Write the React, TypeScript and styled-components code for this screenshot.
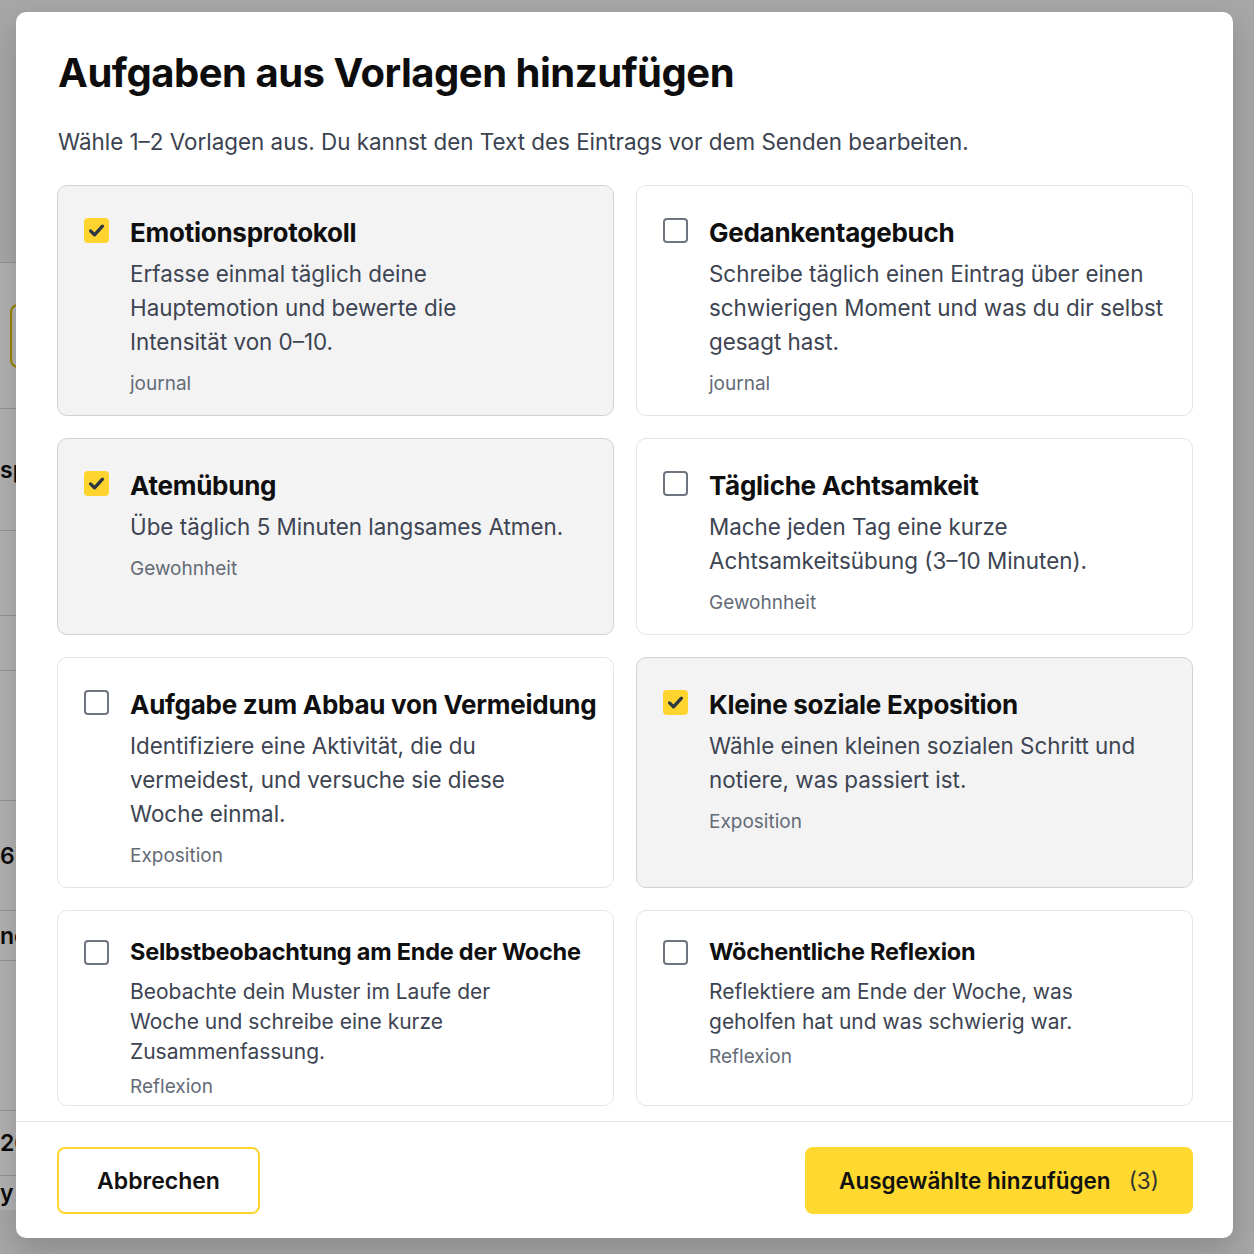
import React, { Fragment } from "react";
import styled, { createGlobalStyle, css } from "styled-components";

const GlobalStyle = createGlobalStyle`
  html, body { margin: 0; padding: 0; }
  body { font-family: Inter, "Noto Sans", "Liberation Sans", sans-serif; -webkit-font-smoothing: antialiased; }
  * { box-sizing: border-box; }
`;

type Template = {
  title: string;
  lines: string[];
  tag: string;
  checked: boolean;
};

const templates: Template[] = [
  {
    title: "Emotionsprotokoll",
    lines: ["Erfasse einmal täglich deine", "Hauptemotion und bewerte die", "Intensität von 0–10."],
    tag: "journal",
    checked: true,
  },
  {
    title: "Gedankentagebuch",
    lines: ["Schreibe täglich einen Eintrag über einen", "schwierigen Moment und was du dir selbst", "gesagt hast."],
    tag: "journal",
    checked: false,
  },
  {
    title: "Atemübung",
    lines: ["Übe täglich 5 Minuten langsames Atmen."],
    tag: "Gewohnheit",
    checked: true,
  },
  {
    title: "Tägliche Achtsamkeit",
    lines: ["Mache jeden Tag eine kurze", "Achtsamkeitsübung (3–10 Minuten)."],
    tag: "Gewohnheit",
    checked: false,
  },
  {
    title: "Aufgabe zum Abbau von Vermeidung",
    lines: ["Identifiziere eine Aktivität, die du", "vermeidest, und versuche sie diese", "Woche einmal."],
    tag: "Exposition",
    checked: false,
  },
  {
    title: "Kleine soziale Exposition",
    lines: ["Wähle einen kleinen sozialen Schritt und", "notiere, was passiert ist."],
    tag: "Exposition",
    checked: true,
  },
  {
    title: "Selbstbeobachtung am Ende der Woche",
    lines: ["Beobachte dein Muster im Laufe der", "Woche und schreibe eine kurze", "Zusammenfassung."],
    tag: "Reflexion",
    checked: false,
  },
  {
    title: "Wöchentliche Reflexion",
    lines: ["Reflektiere am Ende der Woche, was", "geholfen hat und was schwierig war."],
    tag: "Reflexion",
    checked: false,
  },
];

/* ---------- underlying page (dimmed) ---------- */

const Stage = styled.div`
  position: relative;
  width: 1254px;
  height: 1254px;
  overflow: hidden;
  background: #f0f0f0;
`;

const UnderPage = styled.div`
  display: flex;
  flex-direction: column;
  padding-top: 262px;
  width: 600px;
`;

const UnderRow = styled.div<{ $h: number }>`
  height: ${(p) => p.$h}px;
  border-top: 1px solid #d6d6d6;
  background: #ffffff;
  display: flex;
  align-items: center;
  font-size: 23px;
  font-weight: 600;
  color: #111;
`;

const UnderTag = styled.div`
  margin-left: 10px;
  width: 200px;
  height: 64px;
  border: 2px solid #e0b800;
  border-radius: 8px;
`;

const Overlay = styled.div`
  position: absolute;
  inset: 0;
  background: rgba(0, 0, 0, 0.3);
  display: flex;
  align-items: flex-start;
  padding: 12px 21px 16px 16px;
`;

/* ---------- modal ---------- */

const Modal = styled.div`
  width: 1217px;
  height: 1226px;
  background: #ffffff;
  border-radius: 10px;
  box-shadow: 0 12px 32px rgba(0, 0, 0, 0.18);
  display: flex;
  flex-direction: column;
  overflow: hidden;
`;

const Header = styled.header`
  padding: 37px 41px 0 42px;
`;

const Title = styled.h1`
  margin: 0;
  font-size: 40px;
  line-height: 48px;
  font-weight: 700;
  letter-spacing: -0.012em;
  color: #0d0d0d;
`;

const Subtitle = styled.p`
  margin: 30px 0 0;
  font-size: 22.4px;
  line-height: 30px;
  color: #3b4250;
`;

const Body = styled.div`
  flex: 1;
  overflow: hidden;
  padding: 28px 40px 18px 41px;
`;

const Grid = styled.div`
  display: grid;
  grid-template-columns: minmax(0, 1fr) minmax(0, 1fr);
  column-gap: 22px;
  row-gap: 22px;
`;

const Card = styled.label<{ $selected: boolean; $compact: boolean }>`
  display: flex;
  align-items: flex-start;
  gap: 21px;
  min-width: 0;
  border-radius: 10px;
  border: 1px solid ${(p) => (p.$selected ? "#d2d2d4" : "#e4e5e7")};
  background: ${(p) => (p.$selected ? "#f3f3f4" : "#ffffff")};
  padding: ${(p) => (p.$compact ? "26px 26px 5px" : "31px 26px 18px")};
  cursor: pointer;
`;

const Box = styled.span<{ $checked: boolean; $compact: boolean }>`
  flex: none;
  width: 25px;
  height: 25px;
  margin-top: ${(p) => (p.$compact ? "3px" : "1px")};
  border-radius: 4px;
  display: flex;
  align-items: center;
  justify-content: center;
  ${(p) =>
    p.$checked
      ? css`
          background: #ffd42e;
          border: none;
        `
      : css`
          background: #ffffff;
          border: 2px solid #6f7580;
        `}
`;

const CardText = styled.div`
  display: flex;
  flex-direction: column;
  min-width: 0;
`;

const CardTitle = styled.div<{ $compact: boolean }>`
  font-size: ${(p) => (p.$compact ? "23.5px" : "26px")};
  line-height: ${(p) => (p.$compact ? "30px" : "32px")};
  font-weight: 700;
  letter-spacing: -0.01em;
  color: #0f0f10;
  white-space: nowrap;
`;

const Desc = styled.div<{ $compact: boolean }>`
  margin-top: ${(p) => (p.$compact ? "10px" : "8px")};
  font-size: ${(p) => (p.$compact ? "21px" : "22.4px")};
  line-height: ${(p) => (p.$compact ? "30px" : "34px")};
  color: #3d4452;
  white-space: nowrap;
`;

const Tag = styled.div<{ $compact: boolean }>`
  margin-top: ${(p) => (p.$compact ? "7px" : "12px")};
  font-size: 19px;
  line-height: 26px;
  color: #646b77;
`;

const Footer = styled.footer`
  border-top: 1px solid #e6e7ea;
  padding: 25px 40px 24px 41px;
  display: flex;
  justify-content: space-between;
  align-items: center;
`;

const CancelButton = styled.button`
  width: 203px;
  height: 67px;
  border: 2px solid #ffd42e;
  border-radius: 8px;
  background: #ffffff;
  font-family: inherit;
  font-size: 23px;
  font-weight: 600;
  color: #111111;
  cursor: pointer;
`;

const PrimaryButton = styled.button`
  width: 388px;
  height: 67px;
  border: none;
  border-radius: 8px;
  background: #ffd92f;
  font-family: inherit;
  font-size: 22.5px;
  font-weight: 600;
  color: #111111;
  display: flex;
  align-items: center;
  justify-content: center;
  gap: 18px;
  cursor: pointer;
`;

const Count = styled.span`
  font-weight: 400;
  color: #333333;
`;

const Check = () => (
  <svg width="19" height="19" viewBox="0 0 24 24" fill="none">
    <polyline
      points="4.5,12.5 9.5,17.5 19.5,6.5"
      stroke="#2c3644"
      strokeWidth="4.2"
      strokeLinecap="round"
      strokeLinejoin="round"
    />
  </svg>
);

export default function App() {
  const selectedCount = templates.filter((t) => t.checked).length;
  return (
    <Stage>
      <GlobalStyle />
      <UnderPage>
        <UnderRow $h={146}>
          <UnderTag />
        </UnderRow>
        <UnderRow $h={122}>sp</UnderRow>
        <UnderRow $h={85} />
        <UnderRow $h={55} />
        <UnderRow $h={130} />
        <UnderRow $h={110}>6i</UnderRow>
        <UnderRow $h={50}>nc</UnderRow>
        <UnderRow $h={150} />
        <UnderRow $h={65}>26</UnderRow>
        <UnderRow $h={35}>y</UnderRow>
      </UnderPage>
      <Overlay>
        <Modal role="dialog" aria-modal="true">
          <Header>
            <Title>Aufgaben aus Vorlagen hinzufügen</Title>
            <Subtitle>
              Wähle 1–2 Vorlagen aus. Du kannst den Text des Eintrags vor dem Senden bearbeiten.
            </Subtitle>
          </Header>
          <Body>
            <Grid>
              {templates.map((t, idx) => {
                const compact = idx >= 6;
                return (
                  <Card key={t.title} $selected={t.checked} $compact={compact}>
                    <Box $checked={t.checked} $compact={compact}>
                      {t.checked && <Check />}
                    </Box>
                    <CardText>
                      <CardTitle $compact={compact}>{t.title}</CardTitle>
                      <Desc $compact={compact}>
                        {t.lines.map((l, i) => (
                          <Fragment key={i}>
                            {l}
                            {i < t.lines.length - 1 && <br />}
                          </Fragment>
                        ))}
                      </Desc>
                      <Tag $compact={compact}>{t.tag}</Tag>
                    </CardText>
                  </Card>
                );
              })}
            </Grid>
          </Body>
          <Footer>
            <CancelButton>Abbrechen</CancelButton>
            <PrimaryButton>
              <span>Ausgewählte hinzufügen</span>
              <Count>({selectedCount})</Count>
            </PrimaryButton>
          </Footer>
        </Modal>
      </Overlay>
    </Stage>
  );
}
